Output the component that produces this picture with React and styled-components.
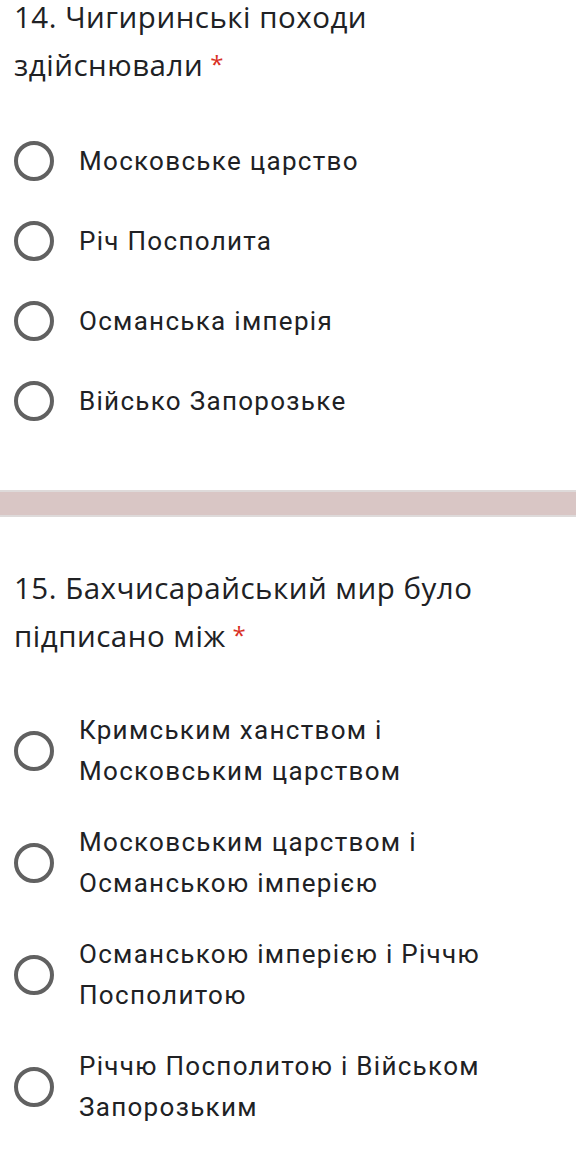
import React from "react";
import styled, { createGlobalStyle } from "styled-components";

const GlobalStyle = createGlobalStyle`
    html, body {
        margin: 0;
        padding: 0;
        background: #ffffff;
    }
    body {
        width: 576px;
        overflow: hidden;
    }
`;

const Page = styled.main`
    display: flex;
    flex-direction: column;
    margin-top: -7px;
`;

const Question = styled.section`
    display: flex;
    flex-direction: column;
    padding: ${(p) => p.pad};
`;

const Title = styled.h2`
    margin: 0;
    padding: 0 70px 0 14px;
    font-family: "Open Sans", "Noto Sans", sans-serif;
    font-weight: 400;
    font-size: 29.5px;
    line-height: 47px;
    color: #202124;
    letter-spacing: 0.5px;
`;

const Required = styled.span`
    color: #d93025;
    font-size: 24px;
    margin-left: 7px;
    vertical-align: 3px;
`;

const Options = styled.div`
    display: flex;
    flex-direction: column;
    margin-top: ${(p) => p.gap};
`;

const Option = styled.label`
    display: flex;
    align-items: center;
    min-height: 80px;
    box-sizing: border-box;
    padding: 15px 0;
    gap: 25px;
    padding-left: 14px;
`;

const Radio = styled.span`
    flex: none;
    width: 40px;
    height: 40px;
    box-sizing: border-box;
    border: 4px solid #616161;
    border-radius: 50%;
`;

const Label = styled.span`
    font-family: Roboto, "Noto Sans", sans-serif;
    font-size: 26px;
    line-height: 41px;
    color: #202124;
    letter-spacing: 1.3px;
    padding-right: 8px;
`;

const Divider = styled.div`
    height: 23px;
    background: #d9c6c5;
    border-top: 2px solid #dedada;
    border-bottom: 2px solid #dedada;
`;

const q14 = ["Московське царство", "Річ Посполита", "Османська імперія", "Військо Запорозьке"];
const q15 = [
    "Кримським ханством і Московським царством",
    "Московським царством і Османською імперією",
    "Османською імперією і Річчю Посполитою",
    "Річчю Посполитою і Військом Запорозьким",
];

const App = () => {
    return (
        <Page>
            <GlobalStyle />
            <Question pad="0 0 49px">
                <Title>
                    14. Чигиринські походи здійснювали<Required>*</Required>
                </Title>
                <Options gap="33px">
                    {q14.map((o) => (
                        <Option key={o}>
                            <Radio />
                            <Label>{o}</Label>
                        </Option>
                    ))}
                </Options>
            </Question>
            <Divider />
            <Question pad="47px 0 0">
                <Title>
                    15. Бахчисарайський мир було підписано між<Required>*</Required>
                </Title>
                <Options gap="36px">
                    {q15.map((o) => (
                        <Option key={o}>
                            <Radio />
                            <Label>{o}</Label>
                        </Option>
                    ))}
                </Options>
            </Question>
        </Page>
    );
};

export default App;
